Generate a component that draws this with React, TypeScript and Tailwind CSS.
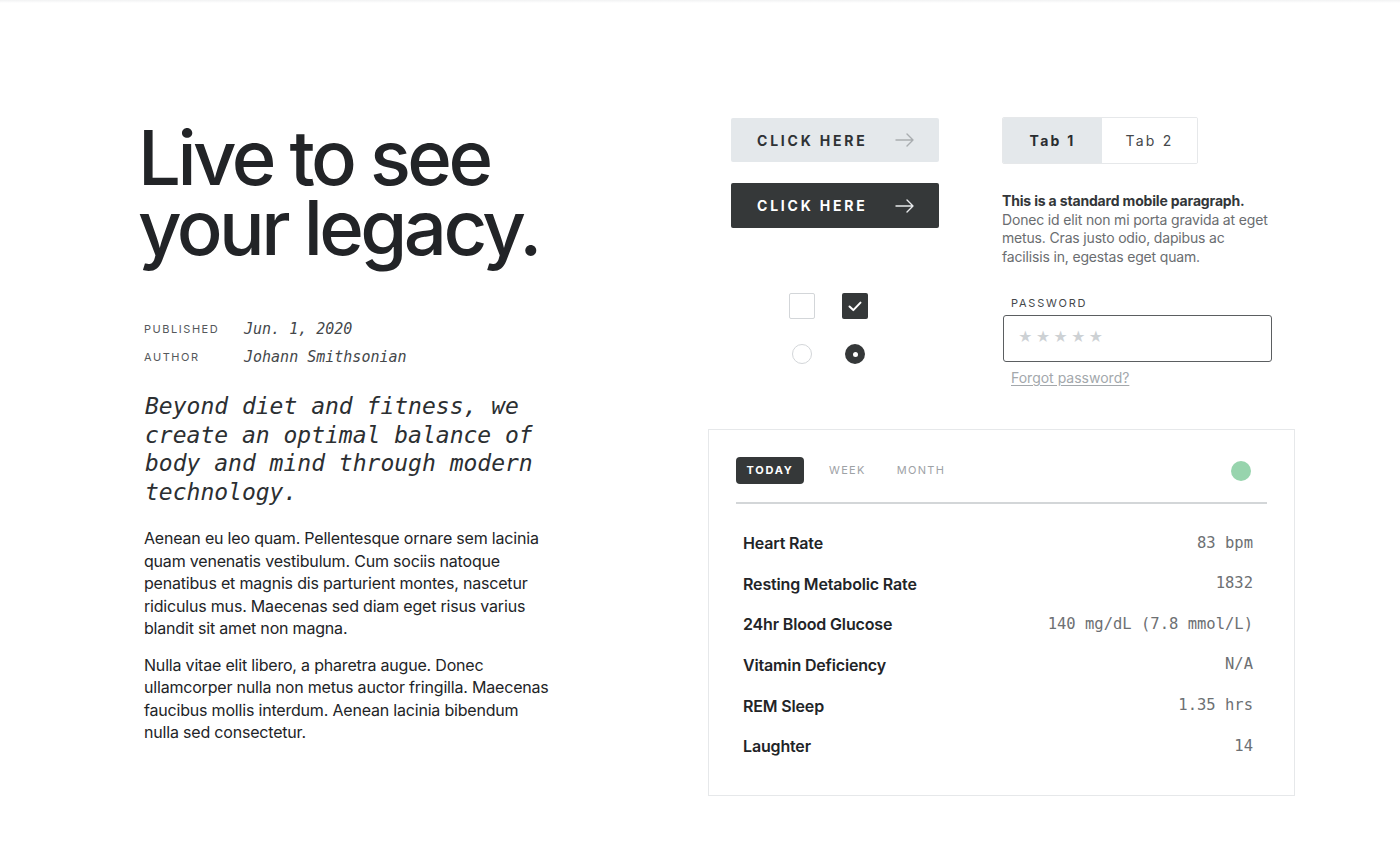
import React from 'react'

const sans = 'font-["Inter","Noto_Sans",sans-serif]'
const mono = 'font-["DejaVu_Sans_Mono","Liberation_Mono",monospace]'

const stats = [
  { label: 'Heart Rate', value: '83 bpm' },
  { label: 'Resting Metabolic Rate', value: '1832' },
  { label: '24hr Blood Glucose', value: '140 mg/dL (7.8 mmol/L)' },
  { label: 'Vitamin Deficiency', value: 'N/A' },
  { label: 'REM Sleep', value: '1.35 hrs' },
  { label: 'Laughter', value: '14' },
]

function Arrow({ className }: { className: string }) {
  return (
    <svg width="20" height="14" viewBox="0 0 20 14" fill="none" className={className} aria-hidden="true">
      <path d="M1 7h17M12 1l6 6-6 6" stroke="currentColor" strokeWidth="1.4" strokeLinecap="round" strokeLinejoin="round" />
    </svg>
  )
}

function Article() {
  return (
    <div className="w-[708px] shrink-0 pl-[138px] pt-[122px]">
      <h1 className="text-[76px] leading-[70px] font-medium tracking-[-0.047em] text-[#222427]">
        Live to see
        <br />
        your legacy.
      </h1>

      <dl className="mt-[57px] ml-[6px] grid grid-cols-[100px_1fr] gap-y-[8px] items-center">
        <dt className="text-[11px] leading-[20px] tracking-[0.14em] uppercase text-[#55585b]">Published</dt>
        <dd className={`${mono} italic text-[15px] leading-[20px] text-[#44474a]`}>Jun. 1, 2020</dd>
        <dt className="text-[11px] leading-[20px] tracking-[0.14em] uppercase text-[#55585b]">Author</dt>
        <dd className={`${mono} italic text-[15px] leading-[20px] text-[#44474a]`}>Johann Smithsonian</dd>
      </dl>

      {/* pull quote */}
      <p className={`${mono} italic mt-[25px] ml-[7px] w-[400px] text-[23px] leading-[28.5px] text-[#2c2f32]`}>
        Beyond diet and fitness, we create an optimal balance of body and mind through modern technology.
      </p>

      <div className="mt-[21px] ml-[6px] w-[408px] text-[16px] leading-[22.5px] tracking-[-0.012em] text-[#222427] space-y-[14px]">
        <p>
          Aenean eu leo quam. Pellentesque ornare sem lacinia quam venenatis vestibulum. Cum sociis natoque
          penatibus et magnis dis parturient montes, nascetur ridiculus mus. Maecenas sed diam eget risus varius
          blandit sit amet non magna.
        </p>
        <p>
          Nulla vitae elit libero, a pharetra augue. Donec ullamcorper nulla non metus auctor fringilla. Maecenas
          faucibus mollis interdum. Aenean lacinia bibendum nulla sed consectetur.
        </p>
      </div>
    </div>
  )
}

function Controls() {
  return (
    <div className="ml-[23px] w-[208px] pt-[1px]">
      <button className="flex h-[44px] w-full items-center justify-between rounded-[2px] bg-[#e4e8eb] pl-[26px] pr-[24px] text-[14px] font-bold tracking-[0.2em] text-[#2f3235]">
        CLICK HERE
        <Arrow className="text-[#a9adb0]" />
      </button>
      <button className="mt-[21px] flex h-[45px] w-full items-center justify-between rounded-[2px] bg-[#353839] pl-[26px] pr-[24px] text-[14px] font-bold tracking-[0.2em] text-white">
        CLICK HERE
        <Arrow className="text-[#e8eaec]" />
      </button>

      <div className="mt-[65px] ml-[58px] grid grid-cols-[26px_26px] gap-x-[27px] gap-y-[25px] justify-items-center">
        <span className="h-[26px] w-[26px] rounded-[2px] border border-[#d3d6d9] bg-white" />
        <span className="flex h-[26px] w-[26px] items-center justify-center rounded-[2px] bg-[#353839]">
          <svg width="14" height="11" viewBox="0 0 14 11" fill="none" aria-hidden="true">
            <path d="M1.5 5.5l3.8 3.6L12.5 1.6" stroke="white" strokeWidth="2" strokeLinecap="round" strokeLinejoin="round" />
          </svg>
        </span>
        <span className="h-[20px] w-[20px] rounded-full border border-[#d3d6d9] bg-white" />
        <span className="flex h-[20px] w-[20px] items-center justify-center rounded-full bg-[#353839]">
          <span className="h-[5px] w-[5px] rounded-full bg-white" />
        </span>
      </div>
    </div>
  )
}

function FormBits() {
  return (
    <div className="ml-[63px] w-[276px]">
      <div className="flex h-[47px] w-[196px] rounded-[2px] border border-[#e6e8ea] overflow-hidden">
        <div className="flex w-[99px] items-center justify-center bg-[#e4e8eb] text-[14px] font-bold tracking-[0.16em] text-[#2a2d30]">
          Tab 1
        </div>
        <div className="flex flex-1 items-center justify-center bg-white text-[14px] tracking-[0.16em] text-[#45484b]">
          Tab 2
        </div>
      </div>

      <p className="mt-[28px] w-[268px] text-[14px] leading-[18.5px] tracking-[-0.012em] text-[#6a6d70]">
        <span className="font-bold text-[#333639]">This is a standard mobile paragraph.</span>
        <br />
        Donec id elit non mi porta gravida at eget metus. Cras justo odio, dapibus ac facilisis in, egestas eget
        quam.
      </p>

      <label className="mt-[30px] ml-[9px] block text-[11px] leading-[14px] tracking-[0.16em] text-[#45484b]">
        PASSWORD
      </label>
      <div className="mt-[5px] ml-[1px] flex h-[47px] w-[269px] items-center rounded-[3px] border-[1.5px] border-[#5b5e61] pl-[14px] pb-[4px]">
        <span className="flex gap-[3px] text-[14px] text-[#cdd1d4]">
          <span>★</span>
          <span>★</span>
          <span>★</span>
          <span>★</span>
          <span>★</span>
        </span>
      </div>
      <a className="mt-[6px] ml-[9px] block text-[14px] leading-[20px] text-[#a3a8ac] underline underline-offset-2">
        Forgot password?
      </a>
    </div>
  )
}

function StatsCard() {
  return (
    <div className="mt-[41px] w-[587px] border border-[#e6e8ea] px-[27px] pt-[27px] pb-[28px]">
      <div className="flex items-center">
        <span className="flex h-[27px] w-[68px] items-center justify-center rounded-[4px] bg-[#353839] text-[11px] font-bold tracking-[0.16em] text-white">
          TODAY
        </span>
        <span className="ml-[25px] text-[11px] tracking-[0.12em] text-[#9ea2a6]">WEEK</span>
        <span className="ml-[31px] text-[11px] tracking-[0.12em] text-[#9ea2a6]">MONTH</span>
        <span className="ml-auto mr-[16px] h-[20px] w-[20px] rounded-full bg-[#97d4ad]" />
      </div>
      <div className="mt-[18px] h-[2px] bg-[#d3d6d8]" />
      <ul className="mt-[19px] pl-[7px] pr-[14px]">
        {stats.map((s) => (
          <li key={s.label} className="flex h-[40.6px] items-center justify-between">
            <span className="text-[16px] font-semibold tracking-[-0.01em] text-[#222427]">{s.label}</span>
            <span className={`${mono} text-[15.5px] text-[#6d7073]`}>{s.value}</span>
          </li>
        ))}
      </ul>
    </div>
  )
}

export default function App() {
  return (
    <div className={`${sans} relative min-h-[864px] w-[1400px] bg-white`}>
      {/* faint top edge */}
      <div className="h-[3px] bg-gradient-to-b from-[#f1f2f3] to-white" />
      <div className="-mt-[3px] flex">
        <Article />
        <div className="pt-[117px]">
          <div className="flex">
            <Controls />
            <FormBits />
          </div>
          <StatsCard />
        </div>
      </div>
    </div>
  )
}
